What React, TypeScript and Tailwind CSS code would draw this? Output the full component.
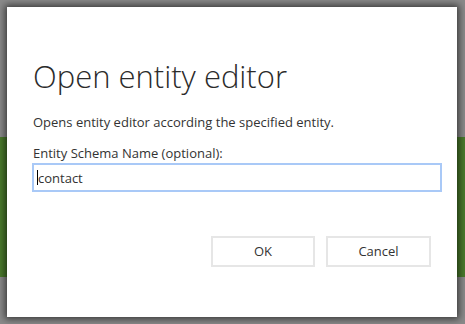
export default function App() {
  return (
    <div className="relative w-[465px] h-[324px] overflow-hidden bg-[#8a8a8a] font-['Open_Sans',sans-serif]">
      <div className="flex flex-col h-full">
        <div className="h-[137px] bg-[#8a8a8a]" />
        <div className="h-[140px] bg-[#4a7a2c]" />
        <div className="flex-1 bg-[#8a8a8a]" />
      </div>

      <div className="absolute left-[7px] top-[7px] w-[450px] h-[310px] bg-white shadow-[0_0_7px_2px_rgba(0,0,0,0.6)] pl-[26px] pr-[15px] flex flex-col">
        <h1 className="mt-[49px] text-[31px] leading-[40px] font-light text-[#2b2b2b]">
          Open entity editor
        </h1>
        <p className="mt-[18px] text-[13px] leading-[16px] text-[#333]">
          Opens entity editor according the specified entity.
        </p>
        <label className="mt-[15px] text-[13px] leading-[16px] text-[#333]">
          Entity Schema Name (optional):
        </label>
        <div className="mt-[2px] ml-[-1px] w-[410px] h-[29px] border-2 border-[#a9c9f7] flex items-center pl-[3px]">
          <span className="h-[15px] border-l border-black" />
          <span className="text-[13px] text-[#333] leading-[16px]">contact</span>
        </div>
        <div className="mt-[44px] flex justify-end gap-[11px] pr-[11px]">
          <button className="w-[104px] h-[31px] border-2 border-[#e6e6e6] bg-white text-[13px] text-[#333]">
            OK
          </button>
          <button className="w-[105px] h-[31px] border-2 border-[#e6e6e6] bg-white text-[13px] text-[#333]">
            Cancel
          </button>
        </div>
      </div>
    </div>
  )
}
